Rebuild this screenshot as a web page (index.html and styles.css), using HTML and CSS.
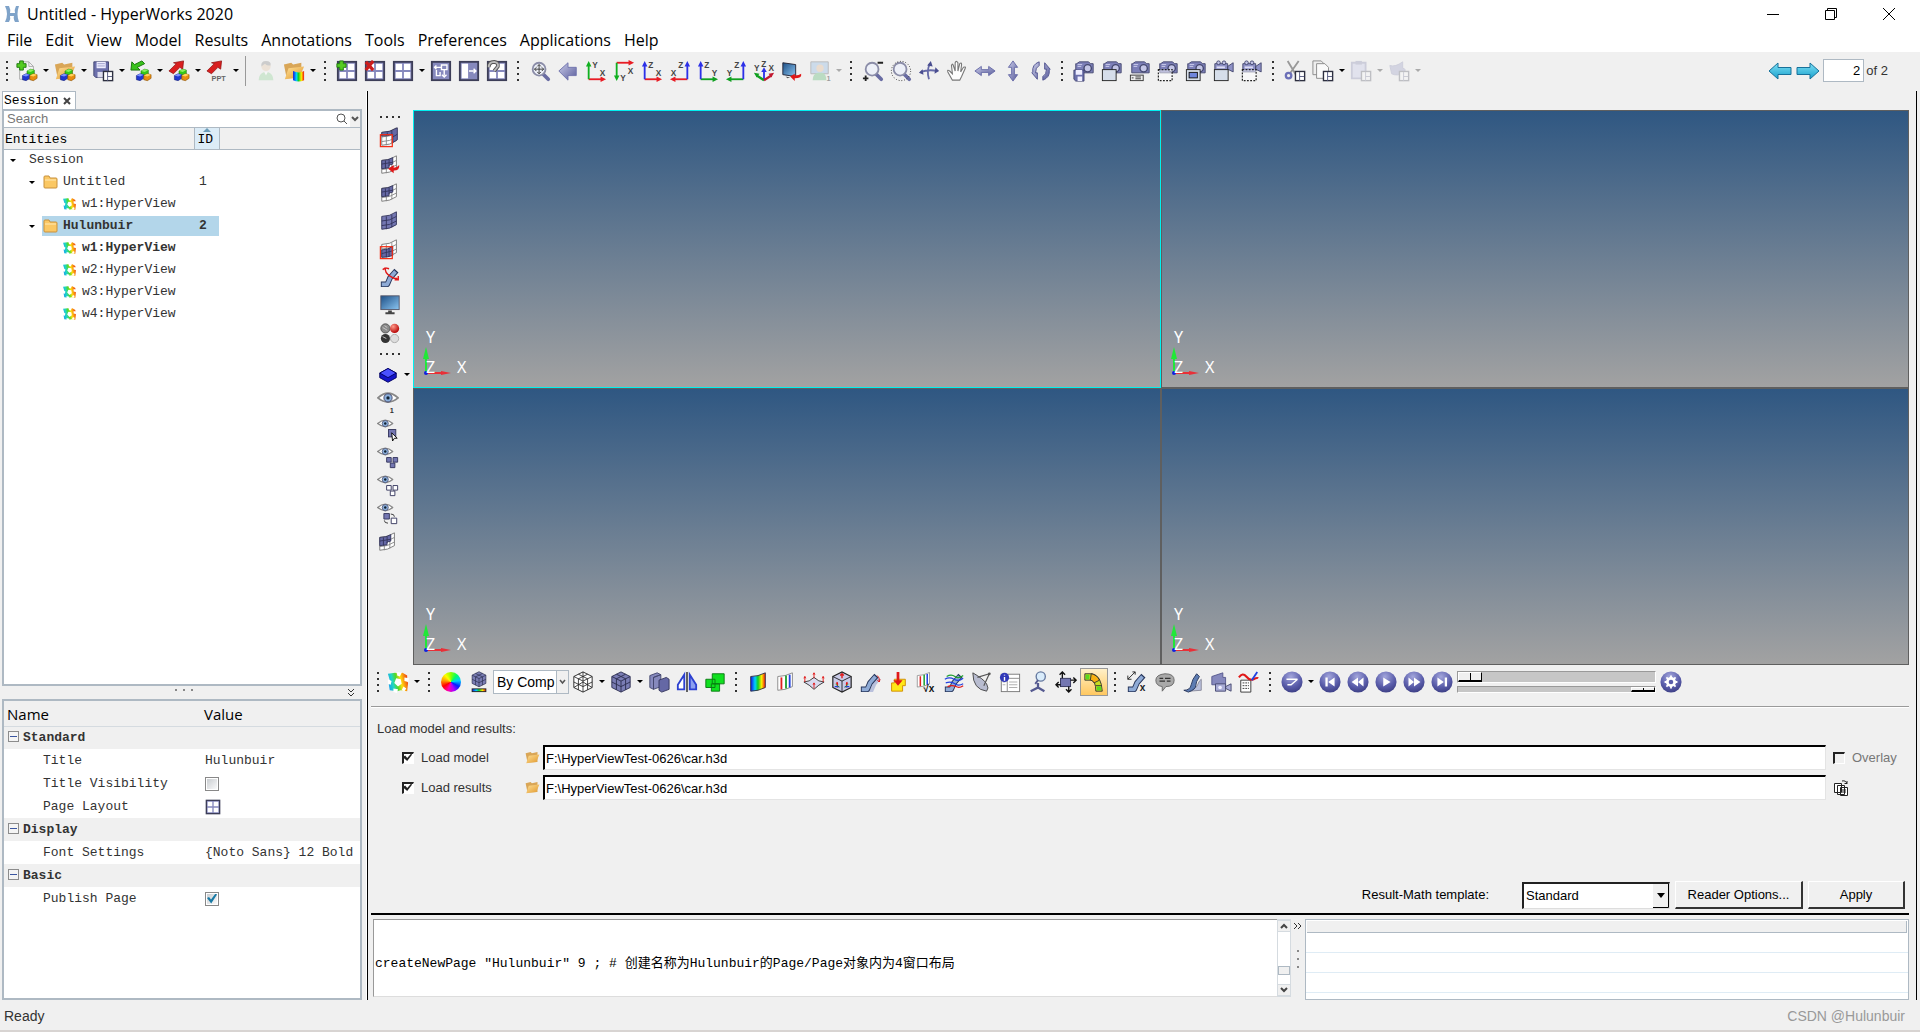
FILE: index.html
```html
<!DOCTYPE html>
<html lang="en">
<head>
<meta charset="utf-8">
<title>Untitled - HyperWorks 2020</title>
<link rel="stylesheet" href="styles.css">
</head>
<body>
<svg class="paints" aria-hidden="true">
<defs>
<linearGradient id="gp" x1="0" y1="0" x2="1" y2="1"><stop offset="0" stop-color="#c9cbe8"/><stop offset="1" stop-color="#5a5d9c"/></linearGradient>
<linearGradient id="gy" x1="0" y1="0" x2="1" y2="1"><stop offset="0" stop-color="#ffe29a"/><stop offset="1" stop-color="#e0962a"/></linearGradient>
<linearGradient id="gc" x1="0" y1="0" x2="0" y2="1"><stop offset="0" stop-color="#7fe0f5"/><stop offset="1" stop-color="#18a0cc"/></linearGradient>
<linearGradient id="gs" x1="0" y1="0" x2="1" y2="1"><stop offset="0" stop-color="#1d4f86"/><stop offset="1" stop-color="#8cc6f2"/></linearGradient>
<linearGradient id="rain" x1="0" y1="0" x2="1" y2="0"><stop offset="0" stop-color="#1010e0"/><stop offset=".3" stop-color="#00d0ff"/><stop offset=".5" stop-color="#10d020"/><stop offset=".75" stop-color="#ffee00"/><stop offset="1" stop-color="#f01010"/></linearGradient>
<linearGradient id="swirl" x1="0" y1=".6" x2="1" y2=".4"><stop offset="0" stop-color="#18a0f0"/><stop offset=".25" stop-color="#20d8c0"/><stop offset=".45" stop-color="#50d828"/><stop offset=".65" stop-color="#ffe010"/><stop offset="1" stop-color="#f04010"/></linearGradient>
<radialGradient id="gb" cx=".45" cy=".25" r=".8"><stop offset="0" stop-color="#a3a6dc"/><stop offset=".6" stop-color="#5a5daa"/><stop offset="1" stop-color="#393b80"/></radialGradient>
<radialGradient id="rg" cx=".35" cy=".3" r=".7"><stop offset="0" stop-color="#ff9a8a"/><stop offset="1" stop-color="#b80808"/></radialGradient>
</defs>
</svg>
<svg class="sprite" aria-hidden="true">
<symbol id="balls" viewBox="0 0 24 24"><path d="M12 12l4-2 4 1v4l-4 2-4-1z" fill="#35c818" stroke="#157008" stroke-width=".6"/><path d="M12 12l4-2 4 1-4 2z" fill="#8bf05f"/><path d="M7 17l4-2 4 1v4l-4 2.500-4-1z" fill="#2038d0" stroke="#101c70" stroke-width=".6"/><path d="M7 17l4-2 4 1-4 2z" fill="#7d92ff"/><path d="M15 17l4-2 4 1v4l-4 2.500-4-1z" fill="#e98e10" stroke="#7d4500" stroke-width=".6"/><path d="M15 17l4-2 4 1-4 2z" fill="#ffd35c"/></symbol>
<symbol id="plus" viewBox="0 0 24 24"><path d="M4 1h4v3h3v4h-3v3h-4v-3h-3v-4h3z" fill="#55cc22" stroke="#1c7a0c"/></symbol>
<symbol id="pane" viewBox="0 0 24 24"><rect x="2" y="2" width="20" height="20" fill="#8689bd" stroke="#3d3e58" stroke-width="2"/></symbol>
<symbol id="mini" viewBox="0 0 24 24"><rect x="12.500" y="12.500" width="10" height="10" fill="#fff" stroke="#2e3040" stroke-width="1.500"/><path d="M17 13v10M17 18h5" stroke="#555a80"/></symbol>
<symbol id="open" viewBox="0 0 24 24"><path d="M1 5l8-2 2 2 9-2v16l-16 1z" fill="#d9a657"/><path d="M2 21l4-12 17-2-5 12z" fill="url(#gy)"/></symbol>
<symbol id="new" viewBox="0 0 24 24"><path d="M4 2h10l5 5v14H4z" fill="#f4f4f4" stroke="#a8a8a8"/><path d="M14 2v5h5" fill="none" stroke="#a8a8a8"/><use href="#plus"/><use href="#balls"/></symbol>
<symbol id="openb" viewBox="0 0 24 24"><use href="#open"/><use href="#balls"/></symbol>
<symbol id="save" viewBox="0 0 24 24"><path d="M2 2h16v17H4l-2-2z" fill="#6c70ac" stroke="#404370"/><path d="M5 2h10v7H5z" fill="#eef"/><path d="M6 4h8M6 6.500h8" stroke="#9a9cc8"/><path d="M6 13h7v6H6z" fill="#dde"/><use href="#mini"/></symbol>
<symbol id="imp" viewBox="0 0 24 24"><path d="M1 11l1-9 3 3 8-4 3 3-8 4 3 3z" fill="#39c21c" stroke="#157008"/><use href="#balls"/></symbol>
<symbol id="rarr" viewBox="0 0 24 24"><path d="M1 12l8-8-3-1 11-2-1 9-3-2-7 7z" fill="#d91f1f" stroke="#8e1010" stroke-width=".8"/></symbol>
<symbol id="exp" viewBox="0 0 24 24"><use href="#rarr"/><use href="#balls"/></symbol>
<symbol id="user" viewBox="0 0 24 24"><g opacity=".4"><path d="M4 22q0-7 6-9l4 0q6 2 6 9z" fill="#9fd8a4"/><circle cx="12" cy="7" r="5" fill="#e8cfb2"/><path d="M7 7q-1-6 5-6t5 5q-5 0-6-2-2 1-4 3z" fill="#999"/><path d="M10 13l2 4 2-4z" fill="#fff"/></g></symbol>
<symbol id="openr" viewBox="0 0 24 24"><use href="#open"/><path d="M11 12q6 3 12 0v10q-6 3-12 0z" fill="url(#rain)"/></symbol>
<symbol id="four" viewBox="0 0 24 24"><use href="#pane"/><path d="M4 4h7v7H4zM13 4h7v7h-7zM4 13h7v7H4zM13 13h7v7h-7z" fill="#fff"/></symbol>
<symbol id="addp" viewBox="0 0 24 24"><use href="#four"/><use href="#plus"/></symbol>
<symbol id="delp" viewBox="0 0 24 24"><use href="#four"/><path d="M2 2l8 9M10 1L2 11" stroke="#cc1d1d" stroke-width="3.500"/></symbol>
<symbol id="swap" viewBox="0 0 24 24"><use href="#pane"/><path d="M12 8H5M7 6L5 8l2 2M12.500 5.500h6v5h-6zM15.500 11v6M13 16l2.500 2.500 2.500-2.500M7 11v6h4v-4" fill="none" stroke="#fff" stroke-width="1.500"/></symbol>
<symbol id="expd" viewBox="0 0 24 24"><use href="#pane"/><path d="M4 4h7v16H4z" fill="#fff"/><path d="M12 12h7M17 9.500l2.500 2.500-2.500 2.500" fill="none" stroke="#fff" stroke-width="1.500"/></symbol>
<symbol id="rev" viewBox="0 0 24 24"><use href="#four"/><path d="M3 8q0-6 6-6 5 1 4 5l-4 5" fill="none" stroke="#555" stroke-width="4"/><path d="M3 8q0-6 6-6 5 1 4 5l-4 5" fill="none" stroke="#bbb" stroke-width="2"/></symbol>
<symbol id="lens" viewBox="0 0 24 24"><path d="M15 15l6 6" stroke="#696ca3" stroke-width="4" stroke-linecap="round"/><circle cx="11" cy="10" r="7" fill="#edf0f8" stroke="#8b8da8" stroke-width="2"/></symbol>
<symbol id="fit" viewBox="0 0 24 24"><use href="#lens"/><path d="M11 5v10M6 10h10M9 7l2-2 2 2M9 13l2 2 2-2M8 8l-2 2 2 2M14 8l2 2-2 2" fill="none" stroke="#333"/></symbol>
<symbol id="back" viewBox="0 0 24 24"><path d="M2 12L12 3v5h9v9h-9v5z" fill="url(#gp)" stroke="#7073ad"/></symbol>
<symbol id="ar-u" viewBox="0 0 24 24"><path d="M4 21V5" stroke="currentColor" stroke-width="2"/><path d="M1 7l3-6 3 6z" fill="currentColor"/></symbol>
<symbol id="ar-r" viewBox="0 0 24 24"><path d="M4 21h15" stroke="currentColor" stroke-width="2"/><path d="M17 18l6 3-6 3z" fill="currentColor"/></symbol>
<symbol id="ar-u2" viewBox="0 0 24 24"><path d="M20 21V5" stroke="currentColor" stroke-width="2"/><path d="M17 7l3-6 3 6z" fill="currentColor"/></symbol>
<symbol id="ar-l" viewBox="0 0 24 24"><path d="M20 21H5" stroke="currentColor" stroke-width="2"/><path d="M7 18l-6 3 6 3z" fill="currentColor"/></symbol>
<symbol id="v1" viewBox="0 0 24 24"><use href="#ar-r" color="#e81c24"/><use href="#ar-u" color="#10b020"/><text x="8" y="9" class="ax">Y</text><text x="16" y="17" class="ax">X</text></symbol>
<symbol id="v2" viewBox="0 0 24 24"><path d="M4 3h15" stroke="#e81c24" stroke-width="2"/><path d="M17 0l6 3-6 3z" fill="#e81c24"/><path d="M4 3v15" stroke="#10b020" stroke-width="2"/><path d="M1 17l3 6 3-6z" fill="#10b020"/><text x="16" y="15" class="ax">X</text><text x="8" y="23" class="ax">Y</text></symbol>
<symbol id="v3" viewBox="0 0 24 24"><use href="#ar-r" color="#e81c24"/><use href="#ar-u" color="#2c30e8"/><text x="8" y="9" class="ax">Z</text><text x="16" y="17" class="ax">X</text></symbol>
<symbol id="v4" viewBox="0 0 24 24"><use href="#ar-l" color="#e81c24"/><use href="#ar-u2" color="#2c30e8"/><text x="10" y="9" class="ax">Z</text><text x="2" y="17" class="ax">X</text></symbol>
<symbol id="v5" viewBox="0 0 24 24"><use href="#ar-r" color="#10a020"/><use href="#ar-u" color="#2c30e8"/><text x="8" y="9" class="ax">Z</text><text x="16" y="17" class="ax">Y</text></symbol>
<symbol id="v6" viewBox="0 0 24 24"><use href="#ar-l" color="#10a020"/><use href="#ar-u2" color="#2c30e8"/><text x="10" y="9" class="ax">Z</text><text x="2" y="17" class="ax">Y</text></symbol>
<symbol id="v7" viewBox="0 0 24 24"><path d="M12 22V11" stroke="#2c30e8" stroke-width="2"/><path d="M9 13l3-5 3 5z" fill="#2c30e8"/><path d="M12 22l-8-5" stroke="#10a020" stroke-width="2.500"/><path d="M1 14l6 1-3 4z" fill="#10a020"/><path d="M12 22l8-5" stroke="#c01830" stroke-width="2.500"/><path d="M23 14l-6 1 3 4z" fill="#c01830"/><text x="9" y="8" class="ax">Z</text><text x="1" y="12" class="ax">Y</text><text x="17" y="12" class="ax">X</text></symbol>
<symbol id="scr" viewBox="0 0 24 24"><path d="M2 3l14 2v13L2 16z" fill="url(#gs)" stroke="#223"/><path d="M5 18l5 1-3 1z" fill="#555"/><path d="M22 15q1 5-7 5v3l-5-5 5-3v2q5 0 7-2z" fill="#e01818"/></symbol>
<symbol id="uscr" viewBox="0 0 24 24"><g opacity=".35"><path d="M2 2h19v13H2z" fill="#8bb6e0" stroke="#555"/><path d="M4 22q0-7 6-8h4q5 1 5 8z" fill="#5cb870"/><circle cx="12" cy="9" r="4" fill="#e0b890"/><text x="19" y="23" font-size="8" font-weight="bold">1</text></g></symbol>
<symbol id="zio" viewBox="0 0 24 24"><use href="#lens"/><path d="M17 3h6M1 20h6M4 17v6" stroke="#222" stroke-width="2"/></symbol>
<symbol id="zcir" viewBox="0 0 24 24"><use href="#lens"/><circle cx="12" cy="12" r="10.500" fill="none" stroke="#222" stroke-dasharray="1 2"/></symbol>
<symbol id="rot" viewBox="0 0 24 24"><path d="M3 13q9-3 18-1M12 21q-3-9 1-17" fill="none" stroke="#666aa8" stroke-width="2"/><path d="M19 8l4 4-5 3zM10 6l4-5 2 6zM5 10l-4 4 5 2z" fill="#4a4e90"/></symbol>
<symbol id="hand" viewBox="0 0 24 24"><path d="M7 22l-5-9q-1-3 2-1l3 3-1-9q1-3 2 0l2 6V3q1-3 3 0v9l2-8q2-2 2 1l-1 8 3-5q3-1 2 1l-4 9-2 4z" fill="#fff" stroke="#777" stroke-width="1.200"/></symbol>
<symbol id="hor" viewBox="0 0 24 24"><path d="M1 12l7-5v3.500h8V7l7 5-7 5v-3.500H8V17z" fill="url(#gp)" stroke="#6568a5"/></symbol>
<symbol id="ver" viewBox="0 0 24 24"><path d="M12 1l5 7h-3.500v8H17l-5 7-5-7h3.500V8H7z" fill="url(#gp)" stroke="#6568a5"/></symbol>
<symbol id="spin" viewBox="0 0 24 24"><path d="M10 2Q2 5 3 13l-1 1 6 7V14H6q0-6 4-8zM14 22q8-3 7-11l1-1-6-7v7h2q0 6-4 8z" fill="url(#gp)" stroke="#4c4f8c"/></symbol>
<symbol id="cam" viewBox="0 0 24 24"><path d="M4 4l3-2h10l2 2h3v10H3V4z" fill="#7c7fb8" stroke="#44476f"/><path d="M5 5h5M5 7h4" stroke="#cfd1ee"/><circle cx="16" cy="9" r="4" fill="#c3c5e6" stroke="#44476f" stroke-width="1.500"/></symbol>
<symbol id="vid" viewBox="0 0 24 24"><path d="M2 4h14v9H2zM16 7l6-4v10l-6-3z" fill="#8e91c6" stroke="#44476f"/><circle cx="6" cy="3" r="2" fill="#c3c5e6" stroke="#44476f"/><circle cx="12" cy="3" r="2" fill="#c3c5e6" stroke="#44476f"/><path d="M4 8h9" stroke="#dcdcf4" stroke-width="2"/></symbol>
<symbol id="c1" viewBox="0 0 24 24"><use href="#cam"/><path d="M1 11h11v12H3l-2-2z" fill="#6c70ac" stroke="#404370"/><path d="M3 11h7v5H3zM5 18h5v5H5z" fill="#eef"/></symbol>
<symbol id="box" viewBox="0 0 24 24"><rect x="1.500" y="10.500" width="15" height="12" fill="#d6deea" stroke="#222"/></symbol>
<symbol id="dash" viewBox="0 0 24 24"><rect x="1.500" y="10.500" width="15" height="12" fill="#fff" fill-opacity=".5" stroke="#222" stroke-width="1.300" stroke-dasharray="2 1.500"/></symbol>
<symbol id="c2" viewBox="0 0 24 24"><use href="#cam"/><use href="#box"/></symbol>
<symbol id="c3" viewBox="0 0 24 24"><use href="#cam"/><rect x="1.500" y="16.500" width="14" height="6" fill="#eee" stroke="#333"/><path d="M3 19.500h2M7 18.500h6M7 20.500h6" stroke="#333"/></symbol>
<symbol id="c4" viewBox="0 0 24 24"><use href="#cam"/><use href="#dash"/></symbol>
<symbol id="c5" viewBox="0 0 24 24"><use href="#cam"/><use href="#box"/><rect x="4.500" y="13.500" width="9" height="6" fill="#6f86dd" stroke="#111"/></symbol>
<symbol id="c6" viewBox="0 0 24 24"><use href="#vid"/><use href="#box"/></symbol>
<symbol id="c7" viewBox="0 0 24 24"><use href="#vid"/><use href="#dash"/></symbol>
<symbol id="cut" viewBox="0 0 24 24"><path d="M4 1l9 15M16 1L7 14" stroke="#999" stroke-width="2"/><circle cx="5" cy="17" r="3" fill="none" stroke="#6c70b8" stroke-width="2.500"/><use href="#mini"/></symbol>
<symbol id="copy" viewBox="0 0 24 24"><path d="M1 1h9l3 3v12H1z" fill="#eee" stroke="#888"/><path d="M5 4h9l4 4v12H5z" fill="#fafafa" stroke="#888"/><use href="#mini"/></symbol>
<symbol id="paste" viewBox="0 0 24 24"><g opacity=".25"><path d="M2 3h15v17H2z" fill="#b8bce8" stroke="#666a9c" stroke-width="2"/><path d="M6 1h7v4H6z" fill="#666a9c"/><use href="#mini"/></g></symbol>
<symbol id="flag" viewBox="0 0 24 24"><g opacity=".25"><path d="M2 6q6 2 14-4v7q4 0 2 5-8 4-14 1z" fill="#8084b8" stroke="#666a9c"/><use href="#mini"/></g></symbol>
<symbol id="tl" viewBox="0 0 24 18"><path d="M1 9l9-8v4.500h13v7H10V17z" fill="url(#gc)" stroke="#17719a"/></symbol>
<symbol id="tr" viewBox="0 0 24 18"><path d="M23 9l-9-8v4.500H1v7h13V17z" fill="url(#gc)" stroke="#17719a"/></symbol>
<symbol id="wmesh" viewBox="0 0 24 24"><path d="M3 7q9 0 16-5v14q-7 5-16 5z" fill="#fff" stroke="#777"/><path d="M8 7v14M14 5v14M3 12q9 0 16-5M3 17q9 0 16-5" fill="none" stroke="#888"/></symbol>
<symbol id="pmesh" viewBox="0 0 24 24"><path d="M3 7q9 0 16-5v14q-7 5-16 5z" fill="#7477b2" stroke="#33355c"/><path d="M8 7v14M14 5v14M3 12q9 0 16-5M3 17q9 0 16-5" fill="none" stroke="#33355c"/></symbol>
<symbol id="m1" viewBox="0 0 24 24"><use href="#wmesh"/><path d="M3 7q9 0 17-5v13l-5 3V9q-5 2-12 2z" fill="#6568a5" stroke="#33355c"/><path d="M9 7v3M14 5v4M15 12l5-3" stroke="#33355c"/><rect x="1.500" y="9.500" width="13" height="13" fill="none" stroke="#f52a10" stroke-width="1.300"/></symbol>
<symbol id="m3" viewBox="0 0 24 24"><use href="#wmesh"/><path d="M3 7q7 0 12-3v7l-4 1v3l-8 1z" fill="#6568a5" stroke="#33355c"/><path d="M7 7v9M11 6v7M3 11l12-2" stroke="#33355c"/></symbol>
<symbol id="m2" viewBox="0 0 24 24"><use href="#m3"/><path d="M22 12q1 6-6 6v3l-6-5 6-4v3q4 0 6-3z" fill="#e01818"/></symbol>
<symbol id="m5" viewBox="0 0 24 24"><use href="#wmesh"/><path d="M3 13q7 0 12-4v10q-5 2-12 2z" fill="#6568a5" stroke="#33355c"/><path d="M8 12v9M11 11v9M3 17l12-3" stroke="#33355c"/><rect x="1.500" y="9.500" width="13" height="13" fill="none" stroke="#f52a10" stroke-width="1.300"/></symbol>
<symbol id="pipe" viewBox="0 0 24 24"><path d="M2 20h7l3-7 7-8" fill="none" stroke="#26355a" stroke-width="6" stroke-linejoin="round"/><path d="M3 20h6l3-7 6-7" fill="none" stroke="#8fabd6" stroke-width="4" stroke-linejoin="round"/></symbol>
<symbol id="m6" viewBox="0 0 24 24"><use href="#pipe"/><path d="M7 2q-1 5 5 9t8 2M7 2l-3 2M7 2l4 1M21 11v4h-4" fill="none" stroke="#e01818" stroke-width="1.500"/></symbol>
<symbol id="mon" viewBox="0 0 24 24"><rect x="2" y="2" width="20" height="15" fill="url(#gs)" stroke="#556"/><path d="M10 18h4v2h3v2H7v-2h3z" fill="#444"/></symbol>
<symbol id="sph" viewBox="0 0 24 24"><circle cx="7" cy="7" r="5" fill="#8a8a8a" stroke="#555"/><circle cx="17" cy="7" r="5" fill="url(#rg)"/><circle cx="7" cy="18" r="5" fill="#333"/><circle cx="17" cy="18" r="4.500" fill="#ddd" stroke="#aaa"/><path d="M4 6l5 3M6 4l3 2M4 16l4 2" stroke="#ccc"/></symbol>
<symbol id="slab" viewBox="0 0 24 24"><path d="M3 11l9-5 9 5v5l-9 5-9-5z" fill="#1414c8" stroke="#000060"/><path d="M3 11l9-5 9 5-9 5z" fill="#4a50ff" stroke="#000060"/></symbol>
<symbol id="eye" viewBox="0 0 24 12"><path d="M1 6Q12-4 23 6 12 15 1 6z" fill="#fff" stroke="#888" stroke-width="2"/><circle cx="12" cy="6" r="4.500" fill="#8bb0dc" stroke="#446"/><circle cx="12" cy="6" r="1.800" fill="#123"/></symbol>
<symbol id="e1" viewBox="0 0 24 24"><use href="#eye" width="24" height="13" x="0" y="1"/><text x="14" y="24" font-size="8" font-weight="bold" fill="#333">1</text></symbol>
<symbol id="es" viewBox="0 0 24 24"><use href="#eye" width="18" height="10" x="0" y="0"/></symbol>
<symbol id="e2" viewBox="0 0 24 24"><use href="#es"/><rect x="12.500" y="11.500" width="8" height="8" fill="#7477b2" stroke="#33355c"/><path d="M16 15l6 6h-3l-2 3z" fill="#fff" stroke="#000"/></symbol>
<symbol id="e3" viewBox="0 0 24 24"><use href="#es"/><path d="M10.500 11.500h5v5h-5zM17.500 11.500h5v5h-5zM14.500 17.500h5v5h-5z" fill="#7477b2" stroke="#33355c"/></symbol>
<symbol id="e4" viewBox="0 0 24 24"><use href="#es"/><path d="M10.500 11.500h5v5h-5zM17.500 11.500h5v5h-5zM14.500 17.500h5v5h-5z" fill="#fff" stroke="#33355c"/></symbol>
<symbol id="e5" viewBox="0 0 24 24"><use href="#es"/><path d="M7.500 11.500h6v6h-6z" fill="#7477b2" stroke="#33355c"/><path d="M15.500 16.500h6v6h-6z" fill="#fff" stroke="#33355c"/><path d="M15 12q4 0 4 3M8 19q0 3 4 3" fill="none" stroke="#333"/></symbol>
<symbol id="hv" viewBox="0 0 24 24"><path d="M1 3l8-1 3 1 5-1 5 3v5l1 3-1 9-7-1-4 1-8-1-1-6 1-5z" fill="url(#swirl)"/><path d="M10 8l5 1 1 5-4 3-4-4zM11 1l5 1-2 4-3-1zM1 9l4 2-1 4-3-1zM19 7l5 1-1 4-4-1zM7 19l5 1-1 4-4-1zM18 17l3 2-2 3-3-1z" fill="#fff"/></symbol>
<symbol id="cube" viewBox="0 0 24 24"><path d="M2 6l10-5 10 5v12l-10 5-10-5z" fill="#7a7db4" stroke="#2c2e50"/><path d="M2 6l10 5 10-5M12 11v12M7 3.500l10 5v12M17 3.500L7 8.500v12M2 12l10 5 10-5" fill="none" stroke="#2c2e50"/></symbol>
<symbol id="wcube" viewBox="0 0 24 24"><path d="M2 6l10-5 10 5v12l-10 5-10-5z" fill="#fff" stroke="#222"/><path d="M2 6l10 5 10-5M12 1v22M7 3.500l10 5v12M17 3.500L7 8.500v12M2 12l10 5 10-5M2 18l10-6 10 6" fill="none" stroke="#222" stroke-width=".9"/></symbol>
<symbol id="cubec" viewBox="0 0 24 24"><use href="#cube" x="3" width="18" height="18"/><rect x="4.500" y="19.500" width="15" height="3" fill="url(#rain)" stroke="#222"/></symbol>
<symbol id="plates" viewBox="0 0 24 24"><path d="M2 5l8-3 4 2-8 3v13l-4-2zM6 7l8-3v13l-8 3z" fill="#8689bd" stroke="#44476f"/><path d="M12 10l8-3 3 2v11l-8 3-3-2z" fill="#6568a5" stroke="#33355c"/></symbol>
<symbol id="mirror" viewBox="0 0 24 24"><path d="M12 1v22" stroke="#222" stroke-width="1.500"/><path d="M9 4v16H2v-5z" fill="#fff" stroke="#2c40d0" stroke-width="2"/><path d="M15 4v16h7v-5z" fill="#8ca0f0" stroke="#2c40d0" stroke-width="2"/></symbol>
<symbol id="green" viewBox="0 0 24 24"><path d="M9 3h13v11H9zM2 9h10v9H2zM8 14h9v8H8z" fill="#10e020" stroke="#087810"/></symbol>
<symbol id="contour" viewBox="0 0 24 24"><path d="M4 6q8 0 16-4v16q-8 4-16 4z" fill="url(#rain)" stroke="#334"/></symbol>
<symbol id="bars" viewBox="0 0 24 24"><path d="M3 6q8 0 16-4v15q-8 4-16 4z" fill="#fff" stroke="#888"/><path d="M7 7v13" stroke="#e02020" stroke-width="2"/><path d="M12 5v14" stroke="#20a030" stroke-width="2"/><path d="M16 4v14" stroke="#2040e0" stroke-width="2"/></symbol>
<symbol id="plane" viewBox="0 0 24 24"><path d="M1 12q6 0 11-5 5 5 11 5-6 3-11 8-5-5-11-8z" fill="#d9daf0" stroke="#333"/><path d="M2 12V6M12 8V2M22 12V6M12 19v-6M1 8l1-2 1 2M11 4l1-2 1 2M21 8l1-2 1 2M11 15l1-2 1 2" fill="none" stroke="#e01818"/></symbol>
<symbol id="tensor" viewBox="0 0 24 24"><path d="M2 6l10-5 10 5v12l-10 5-10-5z" fill="#c9cbe8" stroke="#222" stroke-width="1.300"/><path d="M2 6l10 5 10-5M12 11v12" fill="none" stroke="#222"/><path d="M12 8V3M7 13v5M17 13v5M10 5l2-2 2 2M7 12l-1 2M17 12l1 2" fill="none" stroke="#e01818" stroke-width="1.500"/><path d="M4 17h5M15 17h5" stroke="#2040e0" stroke-width="1.500"/><path d="M5 14l4 4M15 18l4-4" stroke="#20a030"/></symbol>
<symbol id="deform" viewBox="0 0 24 24"><path d="M8 21h6l3-7 5-6" fill="none" stroke="#b9c0dc" stroke-width="4"/><use href="#pipe"/><path d="M20 5q3 2 2 7M20 10l2 2 1-3" fill="none" stroke="#e01818"/></symbol>
<symbol id="down" viewBox="0 0 24 24"><path d="M8 9h12v7h-3v6H5v-9h3z" fill="#ffe818" stroke="#d08a00"/><path d="M10.500 1h3v9h3.500l-5 6-5-6h3.500z" fill="#e01818"/></symbol>
<symbol id="barsx" viewBox="0 0 24 24"><use href="#bars" width="20" height="20"/><text x="9" y="23" font-size="11" font-weight="bold" fill="#111">√x</text></symbol>
<symbol id="stream" viewBox="0 0 24 24"><use href="#pipe"/><path d="M2 9q5-3 10 0t10-1M3 13q6-2 10 1t9 0" fill="none" stroke="#2040e0" stroke-width="1.300"/><path d="M4 6q5-3 9 0t9-1" fill="none" stroke="#20a030" stroke-width="1.300"/><path d="M5 17q5-2 9 0t8-1" fill="none" stroke="#e01818" stroke-width="1.300"/></symbol>
<symbol id="dish" viewBox="0 0 24 24"><path d="M2 2q0 18 15 20 3-3 0-8T2 2z" fill="#b8bcd0" stroke="#444"/><path d="M7 7L20 3M14 16l6-13" stroke="#555" stroke-width="1.300"/><circle cx="20" cy="3" r="1.500" fill="#555"/></symbol>
<symbol id="info" viewBox="0 0 24 24"><rect x="2.500" y="3.500" width="20" height="19" fill="#fff" stroke="#777"/><path d="M3 8h19M9 8v14" stroke="#888"/><path d="M11 12h9M11 15h9M11 18h9M4 12h3M4 15h3" stroke="#aaa"/><circle cx="6" cy="7" r="5" fill="#3038b8"/><path d="M6 4v1M6 6.500v4" stroke="#fff" stroke-width="1.500"/></symbol>
<symbol id="trace" viewBox="0 0 24 24"><path d="M12 13v5l-8 4M12 18l7 4" fill="none" stroke="#555a90" stroke-width="2.500"/><circle cx="15" cy="6" r="5" fill="#d9ecfb" stroke="#667aa0" stroke-width="1.500"/><path d="M12 10l-3 4" stroke="#555a90" stroke-width="2"/></symbol>
<symbol id="move" viewBox="0 0 24 24"><rect x="6" y="8" width="11" height="9" fill="#7477b2" stroke="#33355c"/><path d="M8 8V2M5 4l3-3 3 3M17 10h6M20 7l3 3-3 3M15 17v6M12 20l3 3 3-3M6 15H1M4 12l-3 3 3 3" fill="none" stroke="#111" stroke-width="1.500"/></symbol>
<symbol id="arch" viewBox="0 0 24 24"><path d="M2 3h8q10 2 11 19h-7q0-12-6-12H2z" fill="#c8dc20" stroke="#333"/><path d="M9 3q6 1 9 7l-6 3q-1-3-4-3z" fill="#f8b010" stroke="#333"/><path d="M14 16h6" stroke="#333"/><path d="M3 4h4v5H3zM15 17h5v4h-5z" fill="#58d820"/></symbol>
<symbol id="measx" viewBox="0 0 24 24"><use href="#pipe"/><path d="M2 9l8-8M2 5v4h4M7 1h3v3" fill="none" stroke="#222"/><text x="15" y="22" font-size="11" font-weight="bold" fill="#222">x</text></symbol>
<symbol id="note" viewBox="0 0 24 24"><path d="M12 3q10 0 10 7t-9 7l-4 5v-5q-7-1-7-7t10-7z" fill="#a9a9a9" stroke="#666"/><path d="M6 8h4M12 8h6M6 11h6M14 11h4" stroke="#333" stroke-width="1.300"/></symbol>
<symbol id="ghost" viewBox="0 0 24 24"><path d="M8 22q7-2 9-7t4-6v12z" fill="#b9c0dc" stroke="#889"/><path d="M2 21q7 0 8-6t6-12l3 3q-4 6-4 10t-8 7z" fill="#5d7cb2" stroke="#26355a"/></symbol>
<symbol id="vcam" viewBox="0 0 24 24"><path d="M2 6l12-4v5l3 0v8H2z" fill="#8689bd" stroke="#55588c"/><path d="M6 14h11v8H6zM17 17l6-3v8l-6-3z" fill="#a9acd6" stroke="#44476f"/><circle cx="11" cy="18" r="2" fill="#eef"/></symbol>
<symbol id="plot" viewBox="0 0 24 24"><path d="M3 10h11v13H3z" fill="#fff" stroke="#333"/><path d="M5 13h7M5 16h7M5 19h7" stroke="#333" stroke-dasharray="2 1"/><path d="M1 7q4-6 8-1t8 3 5-1" fill="none" stroke="#e01818" stroke-width="2.200"/><path d="M21 1l-6 9" stroke="#2040e0" stroke-width="2"/></symbol>
<symbol id="disc" viewBox="0 0 24 24"><circle cx="12" cy="12" r="11.500" fill="url(#gb)"/></symbol>
<symbol id="p0" viewBox="0 0 24 24"><use href="#disc"/><path d="M6 9h12M7 15h4l7-6" fill="none" stroke="#fff" stroke-width="1.500"/></symbol>
<symbol id="p1" viewBox="0 0 24 24"><use href="#disc"/><path d="M7 7h2.500v10H7zM17 7v10l-7-5z" fill="#fff"/></symbol>
<symbol id="p2" viewBox="0 0 24 24"><use href="#disc"/><path d="M12 7v10l-7-5zM18 7v10l-6-5z" fill="#fff"/></symbol>
<symbol id="p3" viewBox="0 0 24 24"><use href="#disc"/><path d="M9 7l8 5-8 5z" fill="#fff"/></symbol>
<symbol id="p4" viewBox="0 0 24 24"><use href="#disc"/><path d="M12 7v10l7-5zM6 7v10l6-5z" fill="#fff"/></symbol>
<symbol id="p5" viewBox="0 0 24 24"><use href="#disc"/><path d="M15 7h2.500v10H15zM7 7v10l7-5z" fill="#fff"/></symbol>
<symbol id="p6" viewBox="0 0 24 24"><use href="#disc"/><circle cx="12" cy="12" r="4" fill="none" stroke="#fff" stroke-width="3"/><path d="M12 5v14M5 12h14M7 7l10 10M17 7L7 17" stroke="#fff" stroke-width="2"/><circle cx="12" cy="12" r="2.500" fill="#5a5daa"/></symbol>
<symbol id="folder" viewBox="0 0 15 14"><path d="M1 2q0-1 1-1h4l1 2h6q1 0 1 1v8q0 1-1 1H2q-1 0-1-1z" fill="#fbc864" stroke="#c8913c"/><path d="M2 5h11" stroke="#ffe9b5"/></symbol>
<symbol id="files" viewBox="0 0 16 16"><path d="M1.500 3.500h7v9h-7zM4.500 5.500h7v9h-7zM7.500 7.500h7v8h-7z" fill="#fff" stroke="#222"/><path d="M9 10h4M9 12h4M9 1q4-1 5 3M11.500 3.500H14V1" fill="none" stroke="#222"/></symbol>
<symbol id="axes" viewBox="0 0 60 60"><path d="M6 50V34" stroke="#20e838" stroke-width="2"/><path d="M3 36l3-12 3 12z" fill="#20e838"/><path d="M6 50h16" stroke="#e83038" stroke-width="2"/><path d="M21 48l10 2-10 2z" fill="#e83038"/><circle cx="6" cy="50" r="2" fill="#1020e0"/></symbol>
</svg>

<header class="titlebar">
  <svg class="logo" viewBox="0 0 16 18" aria-hidden="true"><path d="M1 1h4q2 4 1 7l5 0q-1-3 1-7h3q-3 8 0 16h-4q-2-4-1-6H6q1 3-1 6H1q4-8 0-16z" fill="#7fa3c9"/></svg>
  <h1>Untitled - HyperWorks 2020</h1>
  <div class="winbtns">
    <button aria-label="Minimize"><svg viewBox="0 0 14 14"><path d="M1 7.500h12"/></svg></button>
    <button aria-label="Restore"><svg viewBox="0 0 14 14"><path d="M1.500 3.500h9v9h-9zM3.500 3V1.500h9v9H11"/></svg></button>
    <button aria-label="Close"><svg viewBox="0 0 14 14"><path d="M1 1l12 12M13 1L1 13"/></svg></button>
  </div>
</header>
<nav class="menubar">
  <button>File</button><button>Edit</button><button>View</button><button>Model</button><button>Results</button><button>Annotations</button><button>Tools</button><button>Preferences</button><button>Applications</button><button>Help</button>
</nav>
<div class="toolbar top">
  <i class="grip"></i>
  <button class="tb" aria-label="New"><svg><use href="#new"/></svg></button><button class="dd" aria-label="New menu"></button>
  <button class="tb" aria-label="Open"><svg><use href="#openb"/></svg></button><button class="dd" aria-label="Open menu"></button>
  <button class="tb" aria-label="Save"><svg><use href="#save"/></svg></button><button class="dd" aria-label="Save menu"></button>
  <button class="tb" aria-label="Import"><svg><use href="#imp"/></svg></button><button class="dd" aria-label="Import menu"></button>
  <button class="tb" aria-label="Export"><svg><use href="#exp"/></svg></button><button class="dd" aria-label="Export menu"></button>
  <button class="tb" aria-label="Export PPT"><svg viewBox="0 0 24 24"><use href="#rarr"/><text class="ppt" x="6" y="23">PPT</text></svg></button><button class="dd" aria-label="Export PPT menu"></button>
  <i class="rule"></i>
  <button class="tb" aria-label="User" disabled><svg><use href="#user"/></svg></button>
  <button class="tb" aria-label="Results"><svg><use href="#openr"/></svg></button><button class="dd" aria-label="Results menu"></button>
  <i class="grip"></i>
  <button class="tb" aria-label="Add page"><svg><use href="#addp"/></svg></button>
  <button class="tb" aria-label="Delete page"><svg><use href="#delp"/></svg></button>
  <button class="tb" aria-label="Layout"><svg><use href="#four"/></svg></button><button class="dd" aria-label="Layout menu"></button>
  <button class="tb" aria-label="Swap windows"><svg><use href="#swap"/></svg></button>
  <button class="tb" aria-label="Expand window"><svg><use href="#expd"/></svg></button>
  <button class="tb" aria-label="Synchronize"><svg><use href="#rev"/></svg></button>
  <i class="grip"></i>
  <button class="tb" aria-label="Fit"><svg><use href="#fit"/></svg></button>
  <button class="tb" aria-label="Previous view"><svg><use href="#back"/></svg></button>
  <button class="tb" aria-label="XY top"><svg><use href="#v1"/></svg></button>
  <button class="tb" aria-label="XY bottom"><svg><use href="#v2"/></svg></button>
  <button class="tb" aria-label="XZ left"><svg><use href="#v3"/></svg></button>
  <button class="tb" aria-label="XZ right"><svg><use href="#v4"/></svg></button>
  <button class="tb" aria-label="YZ front"><svg><use href="#v5"/></svg></button>
  <button class="tb" aria-label="YZ rear"><svg><use href="#v6"/></svg></button>
  <button class="tb" aria-label="Isometric"><svg><use href="#v7"/></svg></button>
  <button class="tb" aria-label="Reverse view"><svg><use href="#scr"/></svg></button>
  <button class="tb" aria-label="User view" disabled><svg><use href="#uscr"/></svg></button><button class="dd off" aria-label="User view menu" disabled></button>
  <i class="grip"></i>
  <button class="tb" aria-label="Zoom"><svg><use href="#zio"/></svg></button>
  <button class="tb" aria-label="Circle zoom"><svg><use href="#zcir"/></svg></button>
  <button class="tb" aria-label="Rotate"><svg><use href="#rot"/></svg></button>
  <button class="tb" aria-label="Pan"><svg><use href="#hand"/></svg></button>
  <button class="tb" aria-label="Horizontal"><svg><use href="#hor"/></svg></button>
  <button class="tb" aria-label="Vertical"><svg><use href="#ver"/></svg></button>
  <button class="tb" aria-label="Spin"><svg><use href="#spin"/></svg></button>
  <i class="grip"></i>
  <button class="tb" aria-label="Save image"><svg><use href="#c1"/></svg></button>
  <button class="tb" aria-label="Capture window"><svg><use href="#c2"/></svg></button>
  <button class="tb" aria-label="Capture panel"><svg><use href="#c3"/></svg></button>
  <button class="tb" aria-label="Capture area"><svg><use href="#c4"/></svg></button>
  <button class="tb" aria-label="Capture page"><svg><use href="#c5"/></svg></button>
  <button class="tb" aria-label="Record window"><svg><use href="#c6"/></svg></button>
  <button class="tb" aria-label="Record area"><svg><use href="#c7"/></svg></button>
  <i class="grip"></i>
  <button class="tb" aria-label="Cut"><svg><use href="#cut"/></svg></button>
  <button class="tb" aria-label="Copy"><svg><use href="#copy"/></svg></button><button class="dd" aria-label="Copy menu"></button>
  <button class="tb" aria-label="Paste" disabled><svg><use href="#paste"/></svg></button><button class="dd off" aria-label="Paste menu" disabled></button>
  <button class="tb" aria-label="Overlay" disabled><svg><use href="#flag"/></svg></button><button class="dd off" aria-label="Overlay menu" disabled></button>
  <div class="pager">
    <button aria-label="Previous page"><svg><use href="#tl"/></svg></button>
    <button aria-label="Next page"><svg><use href="#tr"/></svg></button>
    <input id="page" type="text" value="2"><label for="page">of 2</label>
  </div>
</div>

<main class="workspace">
  <aside class="browser">
    <div class="tab">Session<button aria-label="Close tab"><svg viewBox="0 0 8 8"><path d="M1 1l6 6M7 1L1 7"/></svg></button></div>
    <section class="treebox">
      <div class="search"><input type="text" placeholder="Search" aria-label="Search">
        <button aria-label="Find"><svg viewBox="0 0 12 12"><circle cx="5" cy="5" r="4"/><path d="M8 8l3 3"/></svg></button>
        <button class="more" aria-label="Search options"><svg viewBox="0 0 8 8"><path d="M1 2l3 3 3-3" stroke-width="2"/></svg></button>
      </div>
      <table class="tree">
        <colgroup><col class="c-ent"><col class="c-id"><col></colgroup>
        <thead><tr><th>Entities</th><th class="sorted">ID</th><th></th></tr></thead>
        <tbody>
          <tr><td><div class="node l0"><i class="caret"></i><span>Session</span></div></td><td></td><td></td></tr>
          <tr><td><div class="node l1"><i class="caret"></i><div class="name"><svg><use href="#folder"/></svg>Untitled</div></div></td><td>1</td><td></td></tr>
          <tr><td><div class="node l2"><svg><use href="#hv"/></svg>w1:HyperView</div></td><td></td><td></td></tr>
          <tr class="sel"><td><div class="node l1"><i class="caret"></i><div class="name"><svg><use href="#folder"/></svg>Hulunbuir</div></div></td><td>2</td><td></td></tr>
          <tr class="cur"><td><div class="node l2"><svg><use href="#hv"/></svg>w1:HyperView</div></td><td></td><td></td></tr>
          <tr><td><div class="node l2"><svg><use href="#hv"/></svg>w2:HyperView</div></td><td></td><td></td></tr>
          <tr><td><div class="node l2"><svg><use href="#hv"/></svg>w3:HyperView</div></td><td></td><td></td></tr>
          <tr><td><div class="node l2"><svg><use href="#hv"/></svg>w4:HyperView</div></td><td></td><td></td></tr>
        </tbody>
      </table>
    </section>
    <div class="splitter"><i class="hdots"></i><svg viewBox="0 0 8 8"><path d="M1 0l3 3 3-3M1 4l3 3 3-3"/></svg></div>
    <section class="props">
      <table>
        <colgroup><col class="c-name"><col></colgroup>
        <thead><tr><th>Name</th><th>Value</th></tr></thead>
        <tbody>
          <tr class="grp"><th colspan="2"><i class="minus"></i>Standard</th></tr>
          <tr><td>Title</td><td>Hulunbuir</td></tr>
          <tr><td><label for="tv">Title Visibility</label></td><td><input id="tv" type="checkbox"></td></tr>
          <tr><td>Page Layout</td><td><svg><use href="#four"/></svg></td></tr>
          <tr class="grp"><th colspan="2"><i class="minus"></i>Display</th></tr>
          <tr><td>Font Settings</td><td>{Noto Sans} 12 Bold</td></tr>
          <tr class="grp"><th colspan="2"><i class="minus"></i>Basic</th></tr>
          <tr><td><label for="pp">Publish Page</label></td><td><input id="pp" type="checkbox" checked></td></tr>
        </tbody>
      </table>
    </section>
  </aside>

  <section class="work">
    <div class="stage">
      <div class="sidebar">
        <i class="hgrip"></i>
        <button class="tb" aria-label="Mask"><svg><use href="#m1"/></svg></button>
        <button class="tb" aria-label="Reverse"><svg><use href="#m2"/></svg></button>
        <button class="tb" aria-label="Unmask adjacent"><svg><use href="#m3"/></svg></button>
        <button class="tb" aria-label="Unmask all"><svg><use href="#pmesh"/></svg></button>
        <button class="tb" aria-label="Mask outside"><svg><use href="#m5"/></svg></button>
        <button class="tb" aria-label="Reset transform"><svg><use href="#m6"/></svg></button>
        <button class="tb" aria-label="Display"><svg><use href="#mon"/></svg></button>
        <button class="tb" aria-label="Materials"><svg><use href="#sph"/></svg></button>
        <i class="hgrip"></i>
        <div class="shows">
          <div class="pair"><button class="tb" aria-label="Component"><svg><use href="#slab"/></svg></button><button class="dd" aria-label="Component menu"></button></div>
          <button class="tb" aria-label="Show one"><svg><use href="#e1"/></svg></button>
          <button class="tb" aria-label="Show picked"><svg><use href="#e2"/></svg></button>
          <button class="tb" aria-label="Show all"><svg><use href="#e3"/></svg></button>
          <button class="tb" aria-label="Show none"><svg><use href="#e4"/></svg></button>
          <button class="tb" aria-label="Show reverse"><svg><use href="#e5"/></svg></button>
          <button class="tb" aria-label="Adjacent"><svg><use href="#m3"/></svg></button>
        </div>
      </div>
      <div class="views">
        <div class="view active"><svg class="triad" viewBox="0 0 60 60"><use href="#axes"/><text x="6" y="20">Y</text><text x="6" y="50">Z</text><text x="37" y="50">X</text></svg></div>
        <div class="view"><svg class="triad" viewBox="0 0 60 60"><use href="#axes"/><text x="6" y="20">Y</text><text x="6" y="50">Z</text><text x="37" y="50">X</text></svg></div>
        <div class="view"><svg class="triad" viewBox="0 0 60 60"><use href="#axes"/><text x="6" y="20">Y</text><text x="6" y="50">Z</text><text x="37" y="50">X</text></svg></div>
        <div class="view"><svg class="triad" viewBox="0 0 60 60"><use href="#axes"/><text x="6" y="20">Y</text><text x="6" y="50">Z</text><text x="37" y="50">X</text></svg></div>
      </div>
    </div>
    <div class="toolbar mid">
      <i class="grip"></i>
      <button class="tb" aria-label="HyperView"><svg><use href="#hv"/></svg></button><button class="dd" aria-label="Client menu"></button>
      <i class="grip"></i>
      <span class="tb"><i class="wheel"></i></span>
      <button class="tb" aria-label="Component color"><svg><use href="#cubec"/></svg></button>
      <select class="bycomp" aria-label="Color mode"><option>By Comp</option></select>
      <button class="tb" aria-label="Wireframe"><svg><use href="#wcube"/></svg></button><button class="dd" aria-label="Wireframe menu"></button>
      <button class="tb" aria-label="Shaded"><svg><use href="#cube"/></svg></button><button class="dd" aria-label="Shaded menu"></button>
      <button class="tb" aria-label="Thickness"><svg><use href="#plates"/></svg></button>
      <button class="tb" aria-label="Symmetry"><svg><use href="#mirror"/></svg></button>
      <button class="tb" aria-label="Sets"><svg><use href="#green"/></svg></button>
      <i class="grip"></i>
      <button class="tb" aria-label="Contour"><svg><use href="#contour"/></svg></button>
      <button class="tb" aria-label="Iso"><svg><use href="#bars"/></svg></button>
      <button class="tb" aria-label="Vector"><svg><use href="#plane"/></svg></button>
      <button class="tb" aria-label="Tensor"><svg><use href="#tensor"/></svg></button>
      <button class="tb" aria-label="Deformed"><svg><use href="#deform"/></svg></button>
      <button class="tb" aria-label="Section"><svg><use href="#down"/></svg></button>
      <button class="tb" aria-label="Derived"><svg><use href="#barsx"/></svg></button>
      <button class="tb" aria-label="Streamlines"><svg><use href="#stream"/></svg></button>
      <button class="tb" aria-label="Tracking"><svg><use href="#dish"/></svg></button>
      <button class="tb" aria-label="Query"><svg><use href="#info"/></svg></button>
      <button class="tb" aria-label="Tracing"><svg><use href="#trace"/></svg></button>
      <button class="tb" aria-label="Exploded view"><svg><use href="#move"/></svg></button>
      <button class="tb on" aria-label="Load results"><svg><use href="#arch"/></svg></button>
      <i class="grip"></i>
      <button class="tb" aria-label="Measure"><svg><use href="#measx"/></svg></button>
      <button class="tb" aria-label="Notes"><svg><use href="#note"/></svg></button>
      <button class="tb" aria-label="Ghosting"><svg><use href="#ghost"/></svg></button>
      <button class="tb" aria-label="Video overlay"><svg><use href="#vcam"/></svg></button>
      <button class="tb" aria-label="Build plots"><svg><use href="#plot"/></svg></button>
      <i class="grip"></i>
      <button class="tb" aria-label="Animation mode"><svg><use href="#p0"/></svg></button><button class="dd" aria-label="Animation menu"></button>
      <button class="tb" aria-label="First"><svg><use href="#p1"/></svg></button>
      <button class="tb" aria-label="Rewind"><svg><use href="#p2"/></svg></button>
      <button class="tb" aria-label="Play"><svg><use href="#p3"/></svg></button>
      <button class="tb" aria-label="Forward"><svg><use href="#p4"/></svg></button>
      <button class="tb" aria-label="Last"><svg><use href="#p5"/></svg></button>
      <div class="sliders"><input class="frame" type="range" value="0" aria-label="Current frame"><input class="speed" type="range" value="100" aria-label="Speed"></div>
      <button class="tb" aria-label="Animation settings"><svg><use href="#p6"/></svg></button>
    </div>
    <form class="loader">
      <p>Load model and results:</p>
      <div class="row"><label class="ck"><input type="checkbox" checked>Load model</label><button type="button" class="fo" aria-label="Browse model"><svg><use href="#open"/></svg></button><input class="path" type="text" value="F:\HyperViewTest-0626\car.h3d" aria-label="Model file"><label class="ov"><input type="checkbox" disabled>Overlay</label></div>
      <div class="row"><label class="ck"><input type="checkbox" checked>Load results</label><button type="button" class="fo" aria-label="Browse results"><svg><use href="#open"/></svg></button><input class="path" type="text" value="F:\HyperViewTest-0626\car.h3d" aria-label="Results file"><div class="ov"><button type="button" aria-label="File list"><svg><use href="#files"/></svg></button></div></div>
      <div class="actions"><label for="tpl">Result-Math template:</label><select id="tpl"><option>Standard</option></select><button type="button" class="raised">Reader Options...</button><button type="button" class="raised apply">Apply</button></div>
    </form>
    <div class="bottom">
      <textarea aria-label="Command console" spellcheck="false">createNewPage "Hulunbuir" 9 ; # 创建名称为Hulunbuir的Page/Page对象内为4窗口布局</textarea>
      <div class="scroll"><button aria-label="Scroll up"><svg viewBox="0 0 8 8"><path d="M1 6l3-3 3 3"/></svg></button><i></i><button aria-label="Scroll down"><svg viewBox="0 0 8 8"><path d="M1 2l3 3 3-3"/></svg></button></div>
      <div class="vsplit"><svg viewBox="0 0 8 8"><path d="M0 1l3 3-3 3M4 1l3 3-3 3"/></svg><i></i></div>
      <div class="grid"><i></i></div>
    </div>
  </section>
</main>
<footer class="status"><span>Ready</span><span class="mark">CSDN @Hulunbuir</span></footer>
</body>
</html>
```
FILE: styles.css
```css
* { box-sizing: border-box; }
body { margin: 0; min-height: 100vh; display: flex; flex-direction: column; background: #f0f0f0; color: #333; font: 13px/16px "Liberation Sans", sans-serif; }
button { border: 0; padding: 0; margin: 0; background: none; color: inherit; font: inherit; display: flex; align-items: center; justify-content: center; flex: none; }
input, select, textarea { font: inherit; color: #000; margin: 0; border-radius: 0; outline: 0; }
svg { display: block; flex: none; }
i { display: block; flex: none; }
.paints { position: absolute; width: 0; height: 0; }
.sprite { display: none; }
.ax { font: bold 9px "Liberation Sans", sans-serif; fill: #444; }
.ppt { font: bold 8px "Liberation Sans", sans-serif; fill: #666; }
symbol text { font-family: "Liberation Sans", sans-serif; }

.titlebar { display: flex; align-items: center; height: 28px; padding-left: 4px; background: #fff; color: #000; }
.logo { width: 16px; height: 18px; margin-right: 7px; }
.titlebar h1 { margin: 0; font: 16px/20px "Open Sans", sans-serif; }
.winbtns { margin-left: auto; display: flex; padding-right: 2px; }
.winbtns button { width: 58px; height: 28px; }
.winbtns svg { width: 14px; height: 14px; fill: none; stroke: #000; }
.menubar { display: flex; height: 24px; padding: 0 7px; gap: 13px; background: #fff; color: #000; font: 16px/22px "Open Sans", sans-serif; }

.toolbar { display: flex; align-items: center; flex: none; }
.top { height: 39px; padding-bottom: 2px; }
.mid { height: 42px; padding-bottom: 8px; border-bottom: 1px solid #9a9a9a; box-shadow: 0 1px #fff; }
.tb { width: 28px; height: 28px; display: flex; align-items: center; justify-content: center; flex: none; }
.tb svg { width: 22px; height: 22px; }
.dd { width: 10px; height: 28px; }
.dd::before { content: ""; border: 4px solid transparent; border-top-color: #000; border-bottom: 0; }
.sidebar .dd::before, .toolbar .dd::before { border-width: 3px 3px 0; }
.dd.off::before { border-top-color: #aaa; }
.grip { width: 15px; height: 20px; background: repeating-linear-gradient(#333 0 2px, transparent 2px 6px) 6px 0 / 2px 20px no-repeat; }
.top .grip:first-child { width: 13px; }
.mid .grip:first-child { width: 13px; }
.rule { width: 11px; height: 30px; background: linear-gradient(#999, #999) 4px 0 / 1px 30px no-repeat; }
.pager { margin-left: auto; display: flex; align-items: center; gap: 2px; padding-right: 32px; }
.pager button { width: 26px; }
.pager svg { width: 24px; height: 18px; }
.pager input { width: 41px; height: 23px; border: 1px solid #aeb9c3; text-align: right; padding: 0 3px; background: #fff; }

.workspace { flex: 1; display: flex; padding-right: 3px; }
.browser { width: 367px; flex: none; padding-left: 2px; padding-right: 4px; display: flex; flex-direction: column; border-right: 1px solid #fff; font: 13px/20px "Liberation Mono", monospace; }
.tab { align-self: flex-start; height: 18px; display: flex; align-items: center; gap: 4px; padding: 0 4px 0 1px; border: 1px solid #aeb9c3; border-bottom: 0; background: #fff; color: #000; line-height: 17px; }
.tab svg { width: 8px; height: 8px; stroke: #444; stroke-width: 2; }
.treebox { flex: 1; border: 2px solid #aeb9c3; background: #fff; }
.search { display: flex; height: 17px; border-bottom: 1px solid #aeb9c3; }
.search input { flex: 1; min-width: 0; border: 0; padding: 0 3px; background: transparent; font-family: "Liberation Sans", sans-serif; }
.search input::placeholder { color: #777; }
.search button { width: 17px; }
.search svg { width: 12px; height: 12px; fill: none; stroke: #555; }
.search .more { width: 10px; background: #f0f0f0; }
.search .more svg { width: 8px; height: 8px; }
table { border-collapse: collapse; table-layout: fixed; width: 100%; }
td, th { padding: 0; font-weight: normal; text-align: left; white-space: nowrap; }
.c-ent { width: 190px; }
.c-id { width: 25px; }
.tree th { height: 21px; background: #f0f0f0; border-bottom: 1px solid #aeb9c3; border-right: 1px solid #aeb9c3; color: #000; padding: 3px 1px 0; line-height: 17px; }
.tree th:last-child { border-right: 0; }
.tree .sorted { background: #dcecf7; padding-left: 3px; position: relative; }
.sorted::before { content: ""; position: absolute; top: 0; left: 8px; border: 4px solid transparent; border-bottom-color: #6b9cb8; border-top: 0; }
.tree td { height: 22px; }
.tree td:nth-child(2) { padding-left: 5px; }
.node, .name { display: flex; align-items: center; }
.node svg { width: 15px; height: 14px; margin-right: 5px; }
.caret { width: 6px; border: 3px solid transparent; border-top-color: #000; border-bottom: 0; }
.l0 { padding-left: 6px; gap: 13px; }
.l1 { padding-left: 25px; gap: 7px; }
.l1 .name { flex: 1; padding-left: 1px; height: 20px; }
.l2 { padding-left: 58px; }
.sel .name { background: #b3d6ea; }
.sel td:nth-child(2) { background: linear-gradient(#b3d6ea, #b3d6ea) 0 1px / 25px 20px no-repeat; }
.sel td, .cur td { font-weight: bold; }
.splitter { height: 13px; flex: none; display: flex; align-items: flex-start; padding: 3px 7px 0 173px; justify-content: space-between; }
.splitter svg { width: 8px; height: 8px; fill: none; stroke: #333; }
.hdots { width: 20px; height: 2px; background: repeating-linear-gradient(90deg, #888 0 2px, transparent 2px 8px); }
.props { height: 301px; flex: none; border: 2px solid #aeb9c3; background: #fff; }
.c-name { width: 197px; }
.props thead th { height: 25px; background: #f0f0f0; border-bottom: 1px solid #d5dbe0; color: #000; font: 15px/22px "Open Sans", sans-serif; padding: 1px 3px 0; }
.props td, .grp th { height: 23px; }
.props td:first-child { padding-left: 39px; }
.props td:last-child { padding-left: 4px; }
.props svg { width: 16px; height: 16px; }
.grp th { background: #f0f0f0; font-weight: bold; }
.minus { display: inline-block; vertical-align: -1px; width: 11px; height: 11px; margin: 0 4px; border: 1px solid #8c8c8c; background: linear-gradient(#3a55a0, #3a55a0) center / 7px 1px no-repeat, #f4f4f4; }
.props input { appearance: none; display: block; width: 14px; height: 14px; border: 1px solid #888; background: linear-gradient(135deg, #c4c8cc, #fff); box-shadow: inset 0 0 0 1px #fff; }
.props input:checked::before { content: ""; display: block; width: 10px; height: 10px; margin: 1px; background: #1a7aa5; clip-path: polygon(0 45%, 20% 35%, 40% 60%, 85% 0, 100% 10%, 42% 100%); }

.work { flex: 1; min-width: 0; display: flex; flex-direction: column; border-left: 1px solid #000; border-right: 1px solid #000; padding: 19px 7px 0 3px; }
.stage { flex: 1; display: flex; }
.sidebar { width: 42px; padding-left: 5px; }
.shows { margin-left: -2px; }
.hgrip { width: 20px; height: 13px; margin-left: 4px; background: repeating-linear-gradient(90deg, #333 0 2px, transparent 2px 6px) 0 6px / 20px 2px no-repeat; }
.pair { display: flex; }
.views { flex: 1; display: grid; grid-template: 1fr 1fr / 1fr 1fr; }
.view { display: flex; align-items: flex-end; padding: 0 0 4px 6px; border: 1px solid #5f5f5f; background: linear-gradient(#2f5782, #a2a2a2); }
.view.active { border-color: #00f0f0; }
.triad { width: 60px; height: 60px; font: 16px "Noto Sans", sans-serif; fill: #fff; }
.wheel { width: 20px; height: 20px; border-radius: 50%; background: conic-gradient(#8f0, #0f6, #0cf, #02f, #a0f, #f0a, #f00, #f90, #ff0, #8f0); }
select { appearance: none; background: #fff; }
.bycomp { width: 76px; height: 24px; padding: 0 3px; border: 1px solid #aeb9c3; font-size: 14px; background: url("data:image/svg+xml,%3Csvg xmlns='http://www.w3.org/2000/svg' width='12' height='22'%3E%3Cpath d='M0 0h12v22H0z' fill='%23f0f0f0'/%3E%3Cpath d='M.5 0v22' stroke='%23aeb9c3'/%3E%3Cpath d='M4 9l2.500 3L9 9' fill='none' stroke='%23555' stroke-width='1.500'/%3E%3C/svg%3E") right center no-repeat #fff; }
.tb.on { border: 1px solid #999; background: linear-gradient(#fff0c8, #ffc860); }
.sliders { width: 199px; margin: 0 1px; display: flex; flex-direction: column; gap: 3px; }
.sliders input { appearance: none; display: block; width: 100%; height: 12px; background: #c6c6c6; border: 1px solid #999; border-right-color: #fff; border-bottom-color: #fff; }
.sliders .speed { height: 7px; }
.sliders input::-webkit-slider-thumb { appearance: none; width: 24px; height: 10px; border: 1px solid #fff; border-right-color: #000; border-bottom: 2px solid #000; background: linear-gradient(#000, #000) center / 1px 100% no-repeat, #f0f0f0; }
.sliders .speed::-webkit-slider-thumb { height: 5px; }

.loader { margin: 0; padding: 14px 0 4px 6px; display: flex; flex-direction: column; height: 208px; border-bottom: 2px solid #000; flex: none; }
.loader p { margin: 0 0 8px; }
.row { display: flex; align-items: center; height: 25px; margin-bottom: 5px; }
.ck { width: 147px; display: flex; align-items: center; gap: 7px; padding-left: 25px; }
.loader input[type=checkbox] { appearance: none; width: 12px; height: 12px; border: 2px solid #222; border-right: 1px solid #fff; border-bottom: 1px solid #fff; background: #fff; }
.loader input:checked::before { content: ""; display: block; width: 8px; height: 8px; background: #222; clip-path: polygon(0 35%, 15% 25%, 40% 55%, 90% 0, 100% 15%, 40% 95%, 0 60%); }
.loader input[type=checkbox]:disabled { background: #f0f0f0; }
.fo { width: 16px; margin-right: 3px; }
.fo svg { width: 15px; height: 15px; }
.path { flex: 1; min-width: 0; height: 25px; border: 2px solid #000; border-right: 1px solid #e4e4e4; border-bottom: 1px solid #e4e4e4; padding: 0 1px; background: #fff; }
.ov { width: 83px; padding-left: 7px; display: flex; align-items: center; gap: 7px; color: #777; }
.ov svg { width: 16px; height: 16px; }
.actions { margin-top: auto; display: flex; align-items: center; justify-content: flex-end; color: #000; gap: 5px; padding-right: 4px; }
.actions label { margin-right: 28px; }
.actions select { width: 148px; height: 27px; padding: 0 2px; border: 2px solid #222; border-right: 1px solid #ddd; border-bottom: 1px solid #ddd; background: url("data:image/svg+xml,%3Csvg xmlns='http://www.w3.org/2000/svg' width='16' height='24'%3E%3Cpath d='M0 0h16v24H0z' fill='%23f0f0f0'/%3E%3Cpath d='M15.500 0v23.500H0' fill='none' stroke='%23000'/%3E%3Cpath d='M4 9h8l-4 5z'/%3E%3C/svg%3E") right center no-repeat #fff; }
.raised { width: 128px; height: 28px; border: 1px solid #fff; border-right: 2px solid #333; border-bottom: 2px solid #333; }
.apply { width: 97px; }
.bottom { display: flex; height: 85px; flex: none; padding: 4px 0 0; }
textarea { flex: 3; min-width: 0; height: 78px; resize: none; overflow: hidden; border: 1px solid #999; border-right: 0; border-bottom-color: #ddd; padding: 35px 1px 0; margin-left: 2px; background: #fff; font: 13px/18px "Liberation Mono", "Noto Sans CJK SC", monospace; }
.scroll { width: 14px; height: 78px; flex: none; border: 1px solid #d5dbe0; display: flex; flex-direction: column; background: #fff; }
.scroll button { width: 100%; height: 12px; background: #f0f0f0; border: 1px solid #d5dbe0; border-width: 1px 0; }
.scroll i { height: 9px; margin: auto 0 9px; border: 1px solid #aeb9c3; background: #f0f0f0; }
.scroll svg { width: 8px; height: 8px; fill: none; stroke: #444; stroke-width: 2; }
.vsplit { width: 14px; flex: none; display: flex; flex-direction: column; align-items: center; padding-top: 3px; gap: 20px; }
.vsplit svg { width: 8px; height: 8px; fill: none; stroke: #333; }
.vsplit i { width: 2px; height: 18px; background: repeating-linear-gradient(#888 0 2px, transparent 2px 8px); }
.grid { flex: 2; height: 81px; border: 1px solid #aeb9c3; padding: 1px; background: repeating-linear-gradient(transparent 0 19px, #dfecf5 19px 20px) 0 13px / 100% 66px no-repeat #fff; }
.grid i { height: 12px; background: #f0f0f0; border: 1px solid #aeb9c3; border-top: 0; border-left: 0; }
.status { height: 32px; flex: none; padding: 2px 15px 0 4px; display: flex; align-items: center; justify-content: space-between; border-bottom: 2px solid #d8d4d2; font-size: 14px; }
.mark { color: #999; }
```
